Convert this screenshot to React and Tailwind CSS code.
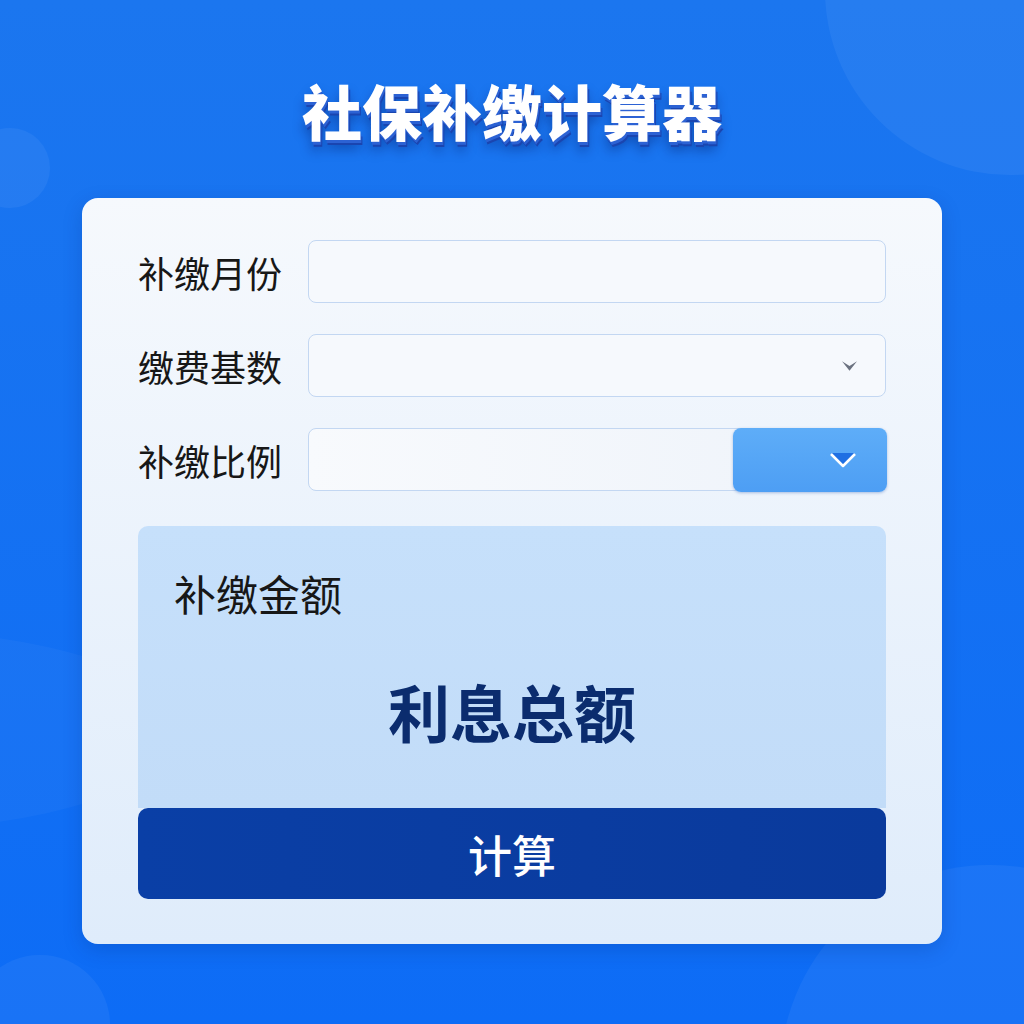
import React from 'react'

const cjk = { fontFamily: '"Noto Sans CJK SC", "Noto Sans", sans-serif' }

function Field({ label, children }) {
    return (
        <div className="flex items-center">
            <div className="w-[170px] text-[36px] leading-none text-[#171717]" style={cjk}>{label}</div>
            {children}
        </div>
    )
}

export default function App() {
    return (
        <div className="relative w-full h-[1024px] overflow-hidden bg-gradient-to-b from-[#1b76ef] to-[#0d6cf6]" style={cjk}>
            {/* background decoration */}
            <div className="absolute w-[370px] h-[370px] rounded-full bg-white/[0.05] left-[825px] top-[-195px]" />
            <div className="absolute w-[80px] h-[80px] rounded-full bg-white/[0.05] left-[-30px] top-[128px]" />
            <div className="absolute w-[140px] h-[140px] rounded-full bg-white/[0.05] left-[-30px] top-[955px]" />
            <div className="absolute w-[420px] h-[420px] rounded-full bg-white/[0.05] left-[780px] top-[865px]" />
            <div className="absolute w-[600px] h-[200px] rounded-[50%] bg-white/[0.03] left-[-420px] top-[630px]" />

            <div className="relative flex flex-col items-center">
                <h1 className="mt-[78px] h-[64px] text-[60px] leading-[64px] font-black text-white [text-shadow:1px_3px_0_#2c62d4,2px_5px_0_#1a45b0,0_9px_12px_rgba(0,20,90,0.4)]">
                    社保补缴计算器
                </h1>

                <div className="mt-[56px] w-[860px] rounded-[16px] bg-gradient-to-b from-[#f6f9fd] to-[#dfecfb] pt-[42px] px-[56px] pb-[45px] flex flex-col shadow-[0_6px_20px_rgba(0,40,120,0.2)]">
                    <div className="flex flex-col gap-[31px]">
                        <Field label="补缴月份">
                            <div className="flex-1 h-[63px] rounded-[8px] border-[1.5px] border-[#c3d7f2] bg-[#f6f9fd]" />
                        </Field>
                        <Field label="缴费基数">
                            <div className="flex-1 h-[63px] rounded-[8px] border-[1.5px] border-[#c3d7f2] bg-[#f6f9fd] flex items-center justify-end pr-[28px]">
                                <svg width="15" height="10" viewBox="0 0 14 9">
                                    <polygon points="0,0 7,4.5 14,0 7,9" fill="#6b7280" />
                                </svg>
                            </div>
                        </Field>
                        <Field label="补缴比例">
                            <div className="flex-1 h-[63px] rounded-[8px] border-[1.5px] border-[#c3d7f2] bg-gradient-to-r from-[#f8fafd] to-[#eef3fa] flex items-stretch justify-end">
                                <div className="w-[154px] -my-[1.5px] -mr-[1.5px] rounded-[8px] bg-gradient-to-b from-[#5eadf8] to-[#4d9ef4] shadow-[0_1px_3px_rgba(0,60,160,0.3)] flex items-center justify-end pr-[30px]">
                                    <svg width="28" height="18" viewBox="0 0 28 18">
                                        <polygon points="2,2 26,2 14,15" fill="#1f6fe3" />
                                        <polyline points="2,3 14,15 26,3" fill="none" stroke="#ffffff" strokeWidth="2.5" strokeLinejoin="round" />
                                    </svg>
                                </div>
                            </div>
                        </Field>
                    </div>

                    <div className="mt-[35px] h-[282px] rounded-t-[10px] bg-gradient-to-b from-[#c6e0fb] to-[#c2dcf8] flex flex-col pt-[46px] pl-[36px]">
                        <div className="text-[42px] leading-none text-[#171717]">补缴金额</div>
                        <div className="mt-[66px] -ml-[36px] text-center text-[62px] leading-none font-bold text-[#0b2c6e]">利息总额</div>
                    </div>

                    <button className="h-[91px] rounded-[10px] bg-gradient-to-r from-[#0a3fa6] to-[#0a3a9c] text-white text-[44px] leading-none font-medium">
                        计算
                    </button>
                </div>
            </div>
        </div>
    )
}
